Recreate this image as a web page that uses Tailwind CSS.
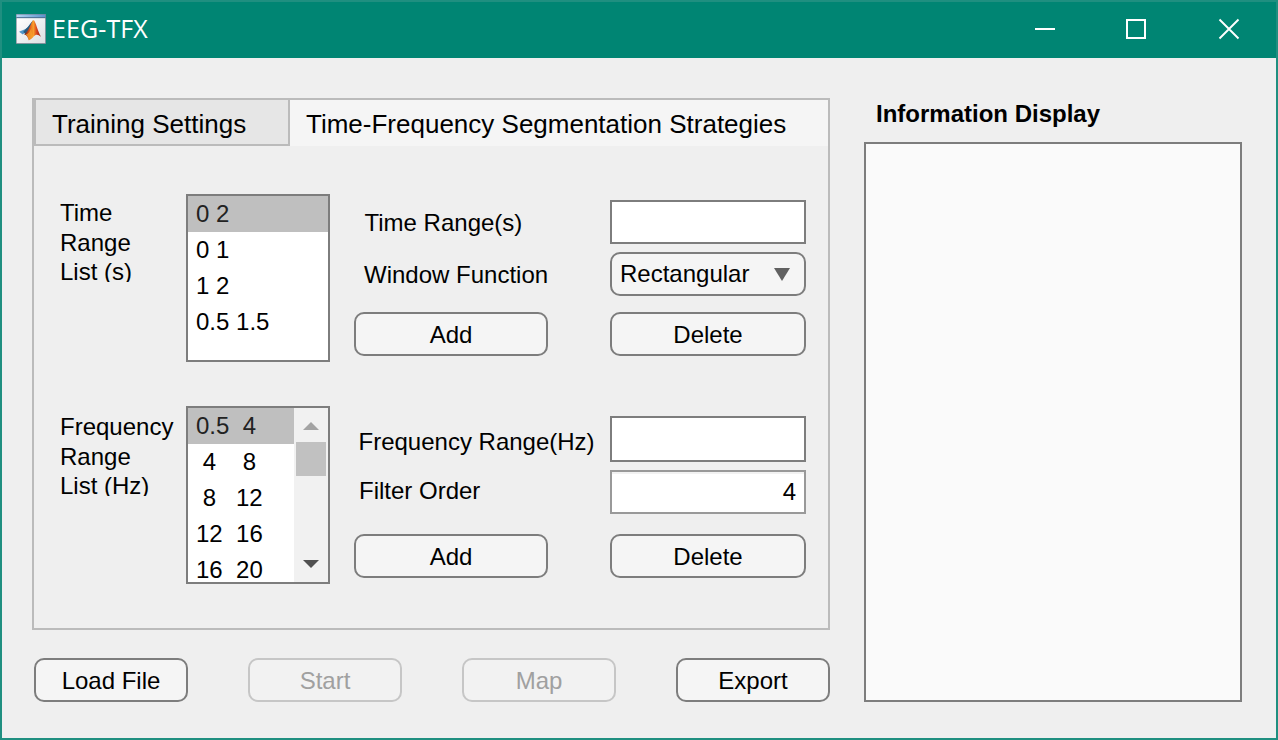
<!DOCTYPE html>
<html lang="en">
<head>
<meta charset="utf-8">
<title>EEG-TFX</title>
<script src="https://cdn.jsdelivr.net/npm/@tailwindcss/browser@4"></script>
</head>
<body class="h-[740px] w-[1278px] overflow-hidden bg-[#efefef] font-['Liberation_Sans',Arial,sans-serif] text-2xl/9 text-black">
<div class="flex h-full w-full flex-col border-2 border-[#1f8f80]">
  <header class="flex h-14 shrink-0 items-center bg-[#008573] pb-0.5 pl-3.5 text-white">
    <svg class="h-[30px] w-[30px] shrink-0" viewBox="0 0 30 30">
      <defs>
        <linearGradient id="bar" x1="0" x2="1"><stop offset="0" stop-color="#b4d2f0"/><stop offset="1" stop-color="#5a93cb"/></linearGradient>
        <linearGradient id="page" x1="0" y1="0" x2="1" y2="1"><stop offset="0" stop-color="#fff"/><stop offset="1" stop-color="#dcdfe2"/></linearGradient>
        <linearGradient id="flame" x1="0" x2="1"><stop offset="0" stop-color="#6b1a16"/><stop offset=".35" stop-color="#e0591b"/><stop offset=".55" stop-color="#f9a12d"/><stop offset=".75" stop-color="#d8421b"/><stop offset="1" stop-color="#8c1c14"/></linearGradient>
      </defs>
      <rect x="0" y="0" width="30" height="30" fill="#6b7f8c"/>
      <rect x="0.5" y="0.5" width="28.8" height="3" fill="url(#bar)"/>
      <rect x="0.5" y="3.2" width="28.8" height="1" fill="#486f96"/>
      <rect x="0.6" y="4.2" width="28.6" height="25" fill="url(#page)"/>
      <path d="M3 17.8 L9.5 15 C11 14.2 12 12.8 13.5 11 C14.6 9.6 15.3 8.2 17 6.6 L14.5 13 L10 20.3 L8.2 19.2 L6.8 20.4 Z" fill="#4f96c8"/>
      <path d="M9.5 15.2 C11.5 14 13 11.5 17 6.6 L14.8 14 L10 20.3 L7.2 18 Z" fill="#28597d"/>
      <path d="M8 20.2 C11 19.4 13.5 13.5 15.2 9.5 C16 7.2 16.8 5.9 17.8 6.2 C19.6 7.4 21.5 16.5 25 22.8 C22.7 20.9 21 20.3 19.2 21.3 C17.3 22.4 16 25 12.9 26.3 C12.1 23.2 10.6 20.5 8 20.2 Z" fill="url(#flame)"/>
      <path d="M12.9 26.3 C12.3 23.8 11.4 21.6 9.8 20.6 C12.5 20 14 17 15.4 14 C15.3 18.5 16.5 20.5 17.2 22.6 C15.9 24 14.8 25.5 12.9 26.3 Z" fill="#f7a62c" fill-opacity=".75"/>
    </svg>
    <h1 class="ml-[6px] pb-0.5 font-['Open_Sans','Noto_Sans',sans-serif] text-[25px]/8 tracking-[0.1px]">EEG-TFX</h1>
    <div class="ml-auto mr-[35px] flex items-center gap-[69px]">
      <svg class="h-6 w-6" viewBox="0 0 24 24"><path d="M2 12H22" stroke="#fff" stroke-width="2"/></svg>
      <svg class="-ml-px -mr-px h-6 w-6" viewBox="0 0 24 24"><rect x="2" y="3" width="18" height="18" fill="none" stroke="#fff" stroke-width="2"/></svg>
      <svg class="h-6 w-6" viewBox="0 0 24 24"><path d="M2.5 2.5L21.5 21.5M21.5 2.5L2.5 21.5" stroke="#fff" stroke-width="1.9"/></svg>
    </div>
  </header>

  <div class="flex grow gap-[34px] pl-[30px] pt-10">
    <main class="flex w-[798px] flex-col">
      <section class="flex h-[532px] flex-col border-2 border-[#bbb]">
        <nav class="flex h-[46px] shrink-0 text-[26px]/[48px]">
          <div class="w-64 border-2 border-t-0 border-[#bbb] bg-[#e6e6e6] pl-4">Training Settings</div>
          <div class="grow bg-[#f5f5f5] pl-4">Time-Frequency Segmentation Strategies</div>
        </nav>

        <div class="flex h-[168px] pl-[26px] mt-12">
          <div class="mt-1 h-[84px] w-[126px] shrink-0 overflow-hidden leading-[29.5px]">Time<br>Range<br>List (s)</div>
          <ul class="w-36 shrink-0 border-2 border-[#7d7d7d] bg-white">
            <li class="bg-[#bfbfbf] pl-2 text-[#222]">0 2</li>
            <li class="pl-2">0 1</li>
            <li class="pl-2">1 2</li>
            <li class="pl-2">0.5 1.5</li>
          </ul>
          <div class="ml-6 mt-1.5 w-[452px]">
            <div class="flex h-11 items-center justify-between pl-[10.5px]">
              <span class="pt-0.5">Time Range(s)</span>
              <div class="h-11 w-[196px] border-2 border-[#7d7d7d] bg-white"></div>
            </div>
            <div class="mt-2 flex h-11 items-center justify-between pl-2.5">
              <span class="pt-0.5">Window Function</span>
              <div class="flex h-11 w-[196px] items-center justify-between rounded-[10px] border-2 border-[#7d7d7d] bg-[#f5f5f5] pl-2 pr-3.5">
                <span>Rectangular</span>
                <svg class="h-[13px] w-4" viewBox="0 0 16 13"><path d="M0 0H16L8 13Z" fill="#616161"/></svg>
              </div>
            </div>
            <div class="mt-4 flex justify-between text-center">
              <div class="h-11 w-[194px] rounded-[10px] border-2 border-[#7d7d7d] bg-[#f5f5f5] leading-[42px]">Add</div>
              <div class="h-11 w-[196px] rounded-[10px] border-2 border-[#7d7d7d] bg-[#f5f5f5] leading-[42px]">Delete</div>
            </div>
          </div>
        </div>

        <div class="mt-11 flex h-[178px] pl-[26px]">
          <div class="mt-1.5 h-[84px] w-[126px] shrink-0 overflow-hidden leading-[29.5px]">Frequency<br>Range<br>List (Hz)</div>
          <div class="flex w-36 shrink-0 overflow-hidden border-2 border-[#7d7d7d] bg-white">
            <ul class="w-[106px]">
              <li class="whitespace-pre bg-[#bfbfbf] pl-2 text-[#222]">0.5  4</li>
              <li class="whitespace-pre pl-2"> 4    8</li>
              <li class="whitespace-pre pl-2"> 8   12</li>
              <li class="whitespace-pre pl-2">12  16</li>
              <li class="whitespace-pre pl-2">16  20</li>
            </ul>
            <div class="flex grow flex-col items-center bg-[#f1f1f1]">
              <svg class="mt-3.5 h-2 w-4" viewBox="0 0 16 8"><path d="M0 8H16L8 0Z" fill="#a3a3a3"/></svg>
              <div class="mt-3 h-[34px] w-[30px] bg-[#c1c1c1]"></div>
              <svg class="mt-[84px] h-2 w-4" viewBox="0 0 16 8"><path d="M0 0H16L8 8Z" fill="#505050"/></svg>
            </div>
          </div>
          <div class="ml-6 mt-2.5 w-[452px]">
            <div class="flex h-[46px] items-center justify-between pl-[4.5px]">
              <span class="pt-1.5">Frequency Range(Hz)</span>
              <div class="h-[46px] w-[196px] border-2 border-[#7d7d7d] bg-white"></div>
            </div>
            <div class="mt-2 flex h-11 items-center justify-between pl-[5px]">
              <span class="pb-0.5">Filter Order</span>
              <div class="h-11 w-[196px] border-2 border-[#999] bg-white pr-2 text-right leading-10 shadow-[inset_0_2px_0_#f2f2f2]">4</div>
            </div>
            <div class="mt-5 flex justify-between text-center">
              <div class="h-11 w-[194px] rounded-[10px] border-2 border-[#7d7d7d] bg-[#f5f5f5] leading-[42px]">Add</div>
              <div class="h-11 w-[196px] rounded-[10px] border-2 border-[#7d7d7d] bg-[#f5f5f5] leading-[42px]">Delete</div>
            </div>
          </div>
        </div>
      </section>

      <div class="mt-7 flex justify-between pl-0.5 text-center leading-[42px]">
        <div class="h-11 w-[154px] rounded-[10px] border-2 border-[#7d7d7d] bg-[#f5f5f5]">Load File</div>
        <div class="h-11 w-[154px] rounded-[10px] border-2 border-[#c6c6c6] bg-[#f2f2f2] text-[#a0a0a0]">Start</div>
        <div class="h-11 w-[154px] rounded-[10px] border-2 border-[#c6c6c6] bg-[#f2f2f2] text-[#a0a0a0]">Map</div>
        <div class="h-11 w-[154px] rounded-[10px] border-2 border-[#7d7d7d] bg-[#f5f5f5]">Export</div>
      </div>
    </main>

    <aside class="w-[378px]">
      <h2 class="h-11 pl-3 font-bold leading-8">Information Display</h2>
      <div class="h-[560px] border-2 border-[#7d7d7d] bg-[#fafafa]"></div>
    </aside>
  </div>
</div>
</body>
</html>
